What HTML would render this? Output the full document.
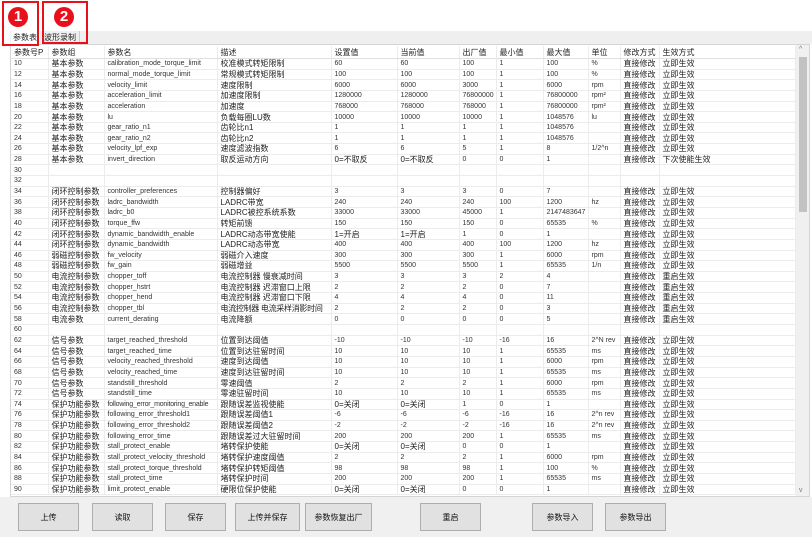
<!DOCTYPE html>
<html><head><meta charset="utf-8"><style>
*{margin:0;padding:0;box-sizing:border-box}
body{width:812px;height:537px;background:#fff;position:relative;overflow:hidden;font-family:"Liberation Sans","Noto Sans CJK SC",sans-serif;color:#222}
.tabbar{position:absolute;left:10px;top:31px;width:802px;height:13px;background:#efefef}
.tab{position:absolute;top:31px;height:13px;font-size:8px;line-height:13px;padding-left:2px;white-space:nowrap}
.box{position:absolute;left:10px;top:44px;width:800px;height:453px;border:1px solid #d4d4d4;background:#fff;overflow:hidden}
table{border-collapse:collapse;table-layout:fixed;position:absolute;left:0;top:1px;width:785px}
td{height:10.65px;font-size:7px;line-height:9px;padding:0 0 0 3px;white-space:nowrap;overflow:hidden;border-right:1px solid #ececec;border-bottom:1px solid #ececec;color:#333}
td.c{font-size:8px;color:#222}
tr.h td{height:12.5px;font-size:8px;color:#222;border-bottom:1px solid #e0e0e0}
.sb{position:absolute;right:0;top:0;width:13px;height:451px;background:#f0f0f0}
.thumb{position:absolute;left:3px;top:12px;width:8px;height:155px;background:#c2c2c2}
.bottom{position:absolute;left:0;top:497px;width:812px;height:40px;background:#f0f0f0}
.btn{position:absolute;top:503px;height:28px;width:61px;background:#e1e1e1;border:1px solid #adadad;font-size:8px;text-align:center;line-height:27px;color:#111}
.red{position:absolute;border:2px solid #e8101a}
.num{position:absolute;width:20px;height:20px;border-radius:50%;background:#e8101a;color:#fff;font-weight:bold;font-size:15px;line-height:20px;text-align:center}
</style></head><body>
<div class="tabbar"></div>
<div class="tab" style="left:11px;width:29px;background:#fff">参数表</div>
<div class="tab" style="left:42px;width:38px;border-right:1px solid #ccc">波形录制</div>
<div class="box">
<table>
<colgroup><col style="width:37px"><col style="width:56px"><col style="width:113px"><col style="width:114px"><col style="width:66px"><col style="width:62px"><col style="width:37px"><col style="width:47px"><col style="width:45px"><col style="width:32px"><col style="width:39px"><col></colgroup>
<tr class="h"><td>参数号P</td><td>参数组</td><td>参数名</td><td>描述</td><td>设置值</td><td>当前值</td><td>出厂值</td><td>最小值</td><td>最大值</td><td>单位</td><td>修改方式</td><td>生效方式</td></tr>
<tr><td>10</td><td class="c">基本参数</td><td>calibration_mode_torque_limit</td><td class="c">校准模式转矩限制</td><td>60</td><td>60</td><td>100</td><td>1</td><td>100</td><td>%</td><td class="c">直接修改</td><td class="c">立即生效</td></tr>
<tr><td>12</td><td class="c">基本参数</td><td>normal_mode_torque_limit</td><td class="c">常规模式转矩限制</td><td>100</td><td>100</td><td>100</td><td>1</td><td>100</td><td>%</td><td class="c">直接修改</td><td class="c">立即生效</td></tr>
<tr><td>14</td><td class="c">基本参数</td><td>velocity_limit</td><td class="c">速度限制</td><td>6000</td><td>6000</td><td>3000</td><td>1</td><td>6000</td><td>rpm</td><td class="c">直接修改</td><td class="c">立即生效</td></tr>
<tr><td>16</td><td class="c">基本参数</td><td>acceleration_limit</td><td class="c">加速度限制</td><td>1280000</td><td>1280000</td><td>76800000</td><td>1</td><td>76800000</td><td>rpm²</td><td class="c">直接修改</td><td class="c">立即生效</td></tr>
<tr><td>18</td><td class="c">基本参数</td><td>acceleration</td><td class="c">加速度</td><td>768000</td><td>768000</td><td>768000</td><td>1</td><td>76800000</td><td>rpm²</td><td class="c">直接修改</td><td class="c">立即生效</td></tr>
<tr><td>20</td><td class="c">基本参数</td><td>lu</td><td class="c">负载每圈LU数</td><td>10000</td><td>10000</td><td>10000</td><td>1</td><td>1048576</td><td>lu</td><td class="c">直接修改</td><td class="c">立即生效</td></tr>
<tr><td>22</td><td class="c">基本参数</td><td>gear_ratio_n1</td><td class="c">齿轮比n1</td><td>1</td><td>1</td><td>1</td><td>1</td><td>1048576</td><td></td><td class="c">直接修改</td><td class="c">立即生效</td></tr>
<tr><td>24</td><td class="c">基本参数</td><td>gear_ratio_n2</td><td class="c">齿轮比n2</td><td>1</td><td>1</td><td>1</td><td>1</td><td>1048576</td><td></td><td class="c">直接修改</td><td class="c">立即生效</td></tr>
<tr><td>26</td><td class="c">基本参数</td><td>velocity_lpf_exp</td><td class="c">速度滤波指数</td><td>6</td><td>6</td><td>5</td><td>1</td><td>8</td><td>1/2^n</td><td class="c">直接修改</td><td class="c">立即生效</td></tr>
<tr><td>28</td><td class="c">基本参数</td><td>invert_direction</td><td class="c">取反运动方向</td><td class="c">0=不取反</td><td class="c">0=不取反</td><td>0</td><td>0</td><td>1</td><td></td><td class="c">直接修改</td><td class="c">下次使能生效</td></tr>
<tr><td>30</td><td></td><td></td><td></td><td></td><td></td><td></td><td></td><td></td><td></td><td></td><td></td></tr>
<tr><td>32</td><td></td><td></td><td></td><td></td><td></td><td></td><td></td><td></td><td></td><td></td><td></td></tr>
<tr><td>34</td><td class="c">闭环控制参数</td><td>controller_preferences</td><td class="c">控制器偏好</td><td>3</td><td>3</td><td>3</td><td>0</td><td>7</td><td></td><td class="c">直接修改</td><td class="c">立即生效</td></tr>
<tr><td>36</td><td class="c">闭环控制参数</td><td>ladrc_bandwidth</td><td class="c">LADRC带宽</td><td>240</td><td>240</td><td>240</td><td>100</td><td>1200</td><td>hz</td><td class="c">直接修改</td><td class="c">立即生效</td></tr>
<tr><td>38</td><td class="c">闭环控制参数</td><td>ladrc_b0</td><td class="c">LADRC被控系统系数</td><td>33000</td><td>33000</td><td>45000</td><td>1</td><td>2147483647</td><td></td><td class="c">直接修改</td><td class="c">立即生效</td></tr>
<tr><td>40</td><td class="c">闭环控制参数</td><td>torque_ffw</td><td class="c">转矩前馈</td><td>150</td><td>150</td><td>150</td><td>0</td><td>65535</td><td>%</td><td class="c">直接修改</td><td class="c">立即生效</td></tr>
<tr><td>42</td><td class="c">闭环控制参数</td><td>dynamic_bandwidth_enable</td><td class="c">LADRC动态带宽使能</td><td class="c">1=开启</td><td class="c">1=开启</td><td>1</td><td>0</td><td>1</td><td></td><td class="c">直接修改</td><td class="c">立即生效</td></tr>
<tr><td>44</td><td class="c">闭环控制参数</td><td>dynamic_bandwidth</td><td class="c">LADRC动态带宽</td><td>400</td><td>400</td><td>400</td><td>100</td><td>1200</td><td>hz</td><td class="c">直接修改</td><td class="c">立即生效</td></tr>
<tr><td>46</td><td class="c">弱磁控制参数</td><td>fw_velocity</td><td class="c">弱磁介入速度</td><td>300</td><td>300</td><td>300</td><td>1</td><td>6000</td><td>rpm</td><td class="c">直接修改</td><td class="c">立即生效</td></tr>
<tr><td>48</td><td class="c">弱磁控制参数</td><td>fw_gain</td><td class="c">弱磁增益</td><td>5500</td><td>5500</td><td>5500</td><td>1</td><td>65535</td><td>1/n</td><td class="c">直接修改</td><td class="c">立即生效</td></tr>
<tr><td>50</td><td class="c">电流控制参数</td><td>chopper_toff</td><td class="c">电流控制器 慢衰减时间</td><td>3</td><td>3</td><td>3</td><td>2</td><td>4</td><td></td><td class="c">直接修改</td><td class="c">重启生效</td></tr>
<tr><td>52</td><td class="c">电流控制参数</td><td>chopper_hstrt</td><td class="c">电流控制器 迟滞窗口上限</td><td>2</td><td>2</td><td>2</td><td>0</td><td>7</td><td></td><td class="c">直接修改</td><td class="c">重启生效</td></tr>
<tr><td>54</td><td class="c">电流控制参数</td><td>chopper_hend</td><td class="c">电流控制器 迟滞窗口下限</td><td>4</td><td>4</td><td>4</td><td>0</td><td>11</td><td></td><td class="c">直接修改</td><td class="c">重启生效</td></tr>
<tr><td>56</td><td class="c">电流控制参数</td><td>chopper_tbl</td><td class="c" style="letter-spacing:-0.3px">电流控制器 电流采样消影时间</td><td>2</td><td>2</td><td>2</td><td>0</td><td>3</td><td></td><td class="c">直接修改</td><td class="c">重启生效</td></tr>
<tr><td>58</td><td class="c">电流参数</td><td>current_derating</td><td class="c">电流降额</td><td>0</td><td>0</td><td>0</td><td>0</td><td>5</td><td></td><td class="c">直接修改</td><td class="c">重启生效</td></tr>
<tr><td>60</td><td></td><td></td><td></td><td></td><td></td><td></td><td></td><td></td><td></td><td></td><td></td></tr>
<tr><td>62</td><td class="c">信号参数</td><td>target_reached_threshold</td><td class="c">位置到达阈值</td><td>-10</td><td>-10</td><td>-10</td><td>-16</td><td>16</td><td>2^N rev</td><td class="c">直接修改</td><td class="c">立即生效</td></tr>
<tr><td>64</td><td class="c">信号参数</td><td>target_reached_time</td><td class="c">位置到达驻留时间</td><td>10</td><td>10</td><td>10</td><td>1</td><td>65535</td><td>ms</td><td class="c">直接修改</td><td class="c">立即生效</td></tr>
<tr><td>66</td><td class="c">信号参数</td><td>velocity_reached_threshold</td><td class="c">速度到达阈值</td><td>10</td><td>10</td><td>10</td><td>1</td><td>6000</td><td>rpm</td><td class="c">直接修改</td><td class="c">立即生效</td></tr>
<tr><td>68</td><td class="c">信号参数</td><td>velocity_reached_time</td><td class="c">速度到达驻留时间</td><td>10</td><td>10</td><td>10</td><td>1</td><td>65535</td><td>ms</td><td class="c">直接修改</td><td class="c">立即生效</td></tr>
<tr><td>70</td><td class="c">信号参数</td><td>standstill_threshold</td><td class="c">零速阈值</td><td>2</td><td>2</td><td>2</td><td>1</td><td>6000</td><td>rpm</td><td class="c">直接修改</td><td class="c">立即生效</td></tr>
<tr><td>72</td><td class="c">信号参数</td><td>standstill_time</td><td class="c">零速驻留时间</td><td>10</td><td>10</td><td>10</td><td>1</td><td>65535</td><td>ms</td><td class="c">直接修改</td><td class="c">立即生效</td></tr>
<tr><td>74</td><td class="c">保护功能参数</td><td style="letter-spacing:-0.2px">following_error_monitoring_enable</td><td class="c">跟随误差监视使能</td><td class="c">0=关闭</td><td class="c">0=关闭</td><td>1</td><td>0</td><td>1</td><td></td><td class="c">直接修改</td><td class="c">立即生效</td></tr>
<tr><td>76</td><td class="c">保护功能参数</td><td>following_error_threshold1</td><td class="c">跟随误差阈值1</td><td>-6</td><td>-6</td><td>-6</td><td>-16</td><td>16</td><td>2^n rev</td><td class="c">直接修改</td><td class="c">立即生效</td></tr>
<tr><td>78</td><td class="c">保护功能参数</td><td>following_error_threshold2</td><td class="c">跟随误差阈值2</td><td>-2</td><td>-2</td><td>-2</td><td>-16</td><td>16</td><td>2^n rev</td><td class="c">直接修改</td><td class="c">立即生效</td></tr>
<tr><td>80</td><td class="c">保护功能参数</td><td>following_error_time</td><td class="c">跟随误差过大驻留时间</td><td>200</td><td>200</td><td>200</td><td>1</td><td>65535</td><td>ms</td><td class="c">直接修改</td><td class="c">立即生效</td></tr>
<tr><td>82</td><td class="c">保护功能参数</td><td>stall_protect_enable</td><td class="c">堵转保护使能</td><td class="c">0=关闭</td><td class="c">0=关闭</td><td>0</td><td>0</td><td>1</td><td></td><td class="c">直接修改</td><td class="c">立即生效</td></tr>
<tr><td>84</td><td class="c">保护功能参数</td><td>stall_protect_velocity_threshold</td><td class="c">堵转保护速度阈值</td><td>2</td><td>2</td><td>2</td><td>1</td><td>6000</td><td>rpm</td><td class="c">直接修改</td><td class="c">立即生效</td></tr>
<tr><td>86</td><td class="c">保护功能参数</td><td>stall_protect_torque_threshold</td><td class="c">堵转保护转矩阈值</td><td>98</td><td>98</td><td>98</td><td>1</td><td>100</td><td>%</td><td class="c">直接修改</td><td class="c">立即生效</td></tr>
<tr><td>88</td><td class="c">保护功能参数</td><td>stall_protect_time</td><td class="c">堵转保护时间</td><td>200</td><td>200</td><td>200</td><td>1</td><td>65535</td><td>ms</td><td class="c">直接修改</td><td class="c">立即生效</td></tr>
<tr><td>90</td><td class="c">保护功能参数</td><td>limit_protect_enable</td><td class="c">硬限位保护使能</td><td class="c">0=关闭</td><td class="c">0=关闭</td><td>0</td><td>0</td><td>1</td><td></td><td class="c">直接修改</td><td class="c">立即生效</td></tr>
</table>
<div class="sb"><div style="position:absolute;top:1px;left:3px;font-size:7px;color:#777">^</div><div class="thumb"></div><div style="position:absolute;bottom:2px;left:3px;font-size:7px;color:#777">v</div></div>
</div>
<div class="bottom"></div>
<div class="btn" style="left:18px">上传</div>
<div class="btn" style="left:92px">读取</div>
<div class="btn" style="left:165px">保存</div>
<div class="btn" style="left:235px;width:65px">上传并保存</div>
<div class="btn" style="left:305px;width:67px">参数恢复出厂</div>
<div class="btn" style="left:420px">重启</div>
<div class="btn" style="left:532px">参数导入</div>
<div class="btn" style="left:605px">参数导出</div>
<div class="red" style="left:2px;top:1px;width:37px;height:45px"></div>
<div class="red" style="left:42px;top:1px;width:46px;height:43px"></div>
<div class="num" style="left:8px;top:7px">1</div>
<div class="num" style="left:54px;top:7px">2</div>
</body></html>
